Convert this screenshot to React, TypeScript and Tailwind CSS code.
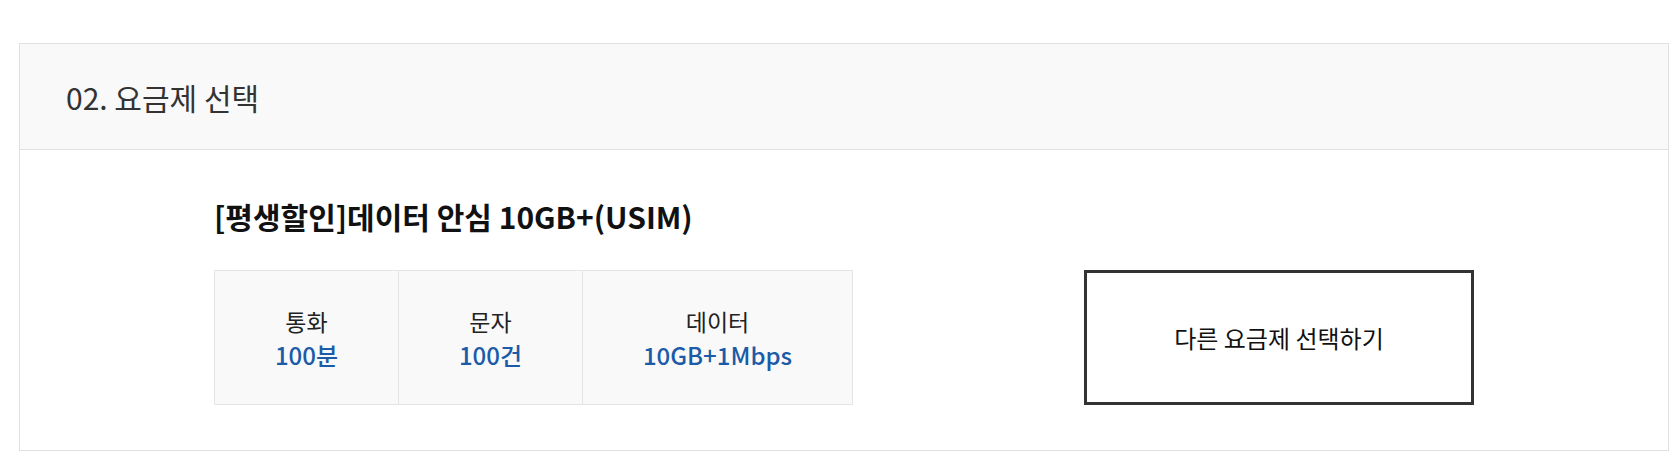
export default function App() {
  const font = { fontFamily: '"Noto Sans CJK KR", "Noto Sans", sans-serif' };
  return (
    <div className="min-h-[460px] bg-white pt-[43px] pl-[19px]" style={font}>
      <div className="w-[1650px] border border-[#e1e1e1]">
        <div className="h-[106px] bg-[#f9f9f9] border-b border-[#e1e1e1] flex items-center pl-[46px]">
          <h2 className="text-[30px] leading-none text-[#333] font-normal">02. 요금제 선택</h2>
        </div>
        <div className="pt-[45px] pb-[45px]">
          <div className="w-[1260px] mx-auto">
            <h3 className="text-[30px] leading-[42px] font-bold text-[#111]">[평생할인]데이터 안심 10GB+(USIM)</h3>
            <div className="mt-[33px] flex justify-between items-stretch">
              <div className="flex border border-[#e5e5e5] bg-[#f9f9f9]">
                <Cell w="w-[183px]" label="통화" value="100분" />
                <Cell w="w-[184px] border-l border-[#e5e5e5]" label="문자" value="100건" />
                <Cell w="w-[270px] border-l border-[#e5e5e5]" label="데이터" value="10GB+1Mbps" />
              </div>
              <button className="w-[390px] h-[135px] border-[3px] border-[#333] bg-white text-[24px] text-[#111] flex items-center justify-center">
                다른 요금제 선택하기
              </button>
            </div>
          </div>
        </div>
      </div>
    </div>
  );
}

function Cell({ w, label, value }: { w: string; label: string; value: string }) {
  return (
    <div className={`${w} h-[133px] flex flex-col items-center justify-center`}>
      <div className="text-[23px] leading-[34px] text-[#222]">{label}</div>
      <div className="text-[24px] leading-[34px] font-medium text-[#1b5ba8]">{value}</div>
    </div>
  );
}
